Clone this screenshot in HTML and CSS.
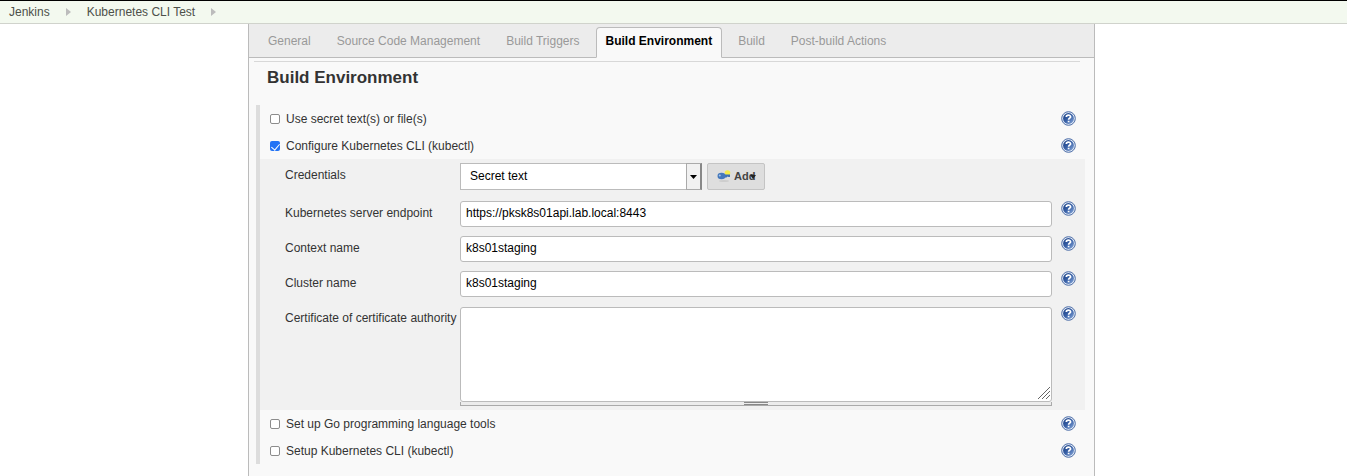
FILE: index.html
```
<!DOCTYPE html>
<html lang="en">
<head>
<meta charset="utf-8">
<title>Kubernetes CLI Test Config [Jenkins]</title>
<link rel="stylesheet" href="styles.css">
</head>
<body>
<svg class="defs" aria-hidden="true">
  <defs>
    <linearGradient id="help-fill" x1="0" y1="0" x2="1" y2="1">
      <stop offset="0" stop-color="#173c80"/>
      <stop offset="0.5" stop-color="#3a62a8"/>
      <stop offset="1" stop-color="#8dacdc"/>
    </linearGradient>
    <symbol id="help" viewBox="0 0 15 15">
      <circle cx="7.5" cy="7.5" r="6.8" fill="#e3ebf6" stroke="#4a6ba6" stroke-width="1"/>
      <circle cx="7.5" cy="7.5" r="5.4" fill="url(#help-fill)"/>
      <path d="M5.3 6.1C5.3 3.5 9.7 3.6 9.6 5.9C9.5 7.2 7.6 7.2 7.6 8.7M7.6 9.7V11.3" fill="none" stroke="#fff" stroke-width="1.7"/>
    </symbol>
  </defs>
</svg>
<nav class="crumbs" aria-label="Breadcrumbs">
  <a class="crumb" href="#">Jenkins</a>
  <svg class="crumb-arrow" viewBox="0 0 5 8"><path d="M0 0L5 4L0 8Z"/></svg>
  <a class="crumb" href="#">Kubernetes CLI Test</a>
  <svg class="crumb-arrow" viewBox="0 0 5 8"><path d="M0 0L5 4L0 8Z"/></svg>
</nav>
<main class="panel">
  <nav class="tabs" aria-label="Sections">
    <a class="tab" href="#">General</a>
    <a class="tab" href="#">Source Code Management</a>
    <a class="tab" href="#">Build Triggers</a>
    <a class="tab tab-active" href="#">Build Environment</a>
    <a class="tab" href="#">Build</a>
    <a class="tab" href="#">Post-build Actions</a>
  </nav>
  <form class="config">
    <h1 class="section-title">Build Environment</h1>
    <div class="section">
      <div class="option">
        <label class="option-label"><input class="check" type="checkbox">Use secret text(s) or file(s)</label>
        <button class="help" type="button" aria-label="Help"><svg class="help-icon"><use href="#help"/></svg></button>
      </div>
      <div class="option">
        <label class="option-label"><input class="check" type="checkbox" checked>Configure Kubernetes CLI (kubectl)</label>
        <button class="help" type="button" aria-label="Help"><svg class="help-icon"><use href="#help"/></svg></button>
      </div>
      <div class="fields">
        <div class="field field-credentials">
          <label class="field-label" for="credentials">Credentials</label>
          <div class="credentials">
            <div class="select-box">
              <select class="select" id="credentials"><option>Secret text</option></select>
              <span class="select-arrow"><svg class="caret" viewBox="0 0 7 4"><path d="M0 0H7L3.5 4Z"/></svg></span>
            </div>
            <button class="add" type="button">
              <svg class="key" viewBox="0 0 15 12">
                <ellipse cx="7" cy="11" rx="5" ry="1" fill="#cdcdcd"/>
                <circle cx="10.5" cy="3" r="2.8" fill="#f5ec4a"/>
                <path d="M6 4.5H13V7H11.5L10.5 6.5L9.5 7.5H6Z" fill="#3f72b5"/>
                <ellipse cx="4.5" cy="6" rx="4" ry="3.2" fill="#4478bc"/>
                <circle cx="2.8" cy="5.6" r="1" fill="#a9c4e6"/>
              </svg>
              <span class="add-text">Add<svg class="add-caret" viewBox="0 0 6 4"><path d="M0 0H6L3 4Z"/></svg></span>
            </button>
          </div>
        </div>
        <div class="field">
          <label class="field-label" for="endpoint">Kubernetes server endpoint</label>
          <input class="text" id="endpoint" type="text" value="https://pksk8s01api.lab.local:8443">
          <button class="help" type="button" aria-label="Help"><svg class="help-icon"><use href="#help"/></svg></button>
        </div>
        <div class="field">
          <label class="field-label" for="context">Context name</label>
          <input class="text" id="context" type="text" value="k8s01staging">
          <button class="help" type="button" aria-label="Help"><svg class="help-icon"><use href="#help"/></svg></button>
        </div>
        <div class="field">
          <label class="field-label" for="cluster">Cluster name</label>
          <input class="text" id="cluster" type="text" value="k8s01staging">
          <button class="help" type="button" aria-label="Help"><svg class="help-icon"><use href="#help"/></svg></button>
        </div>
        <div class="field">
          <label class="field-label" for="certificate">Certificate of certificate authority</label>
          <div class="area-box">
            <textarea class="area" id="certificate"></textarea>
            <svg class="grip" viewBox="0 0 14 14"><path d="M1 13L13 1M5 13L13 5M9 13L13 9"/></svg>
            <div class="area-handle"><span class="handle-mark"></span></div>
          </div>
          <button class="help" type="button" aria-label="Help"><svg class="help-icon"><use href="#help"/></svg></button>
        </div>
      </div>
      <div class="option">
        <label class="option-label"><input class="check" type="checkbox">Set up Go programming language tools</label>
        <button class="help" type="button" aria-label="Help"><svg class="help-icon"><use href="#help"/></svg></button>
      </div>
      <div class="option">
        <label class="option-label"><input class="check" type="checkbox">Setup Kubernetes CLI (kubectl)</label>
        <button class="help" type="button" aria-label="Help"><svg class="help-icon"><use href="#help"/></svg></button>
      </div>
    </div>
  </form>
</main>
</body>
</html>
```
FILE: styles.css
```
* { box-sizing: border-box; }
body {
  margin: 0;
  min-height: 100vh;
  display: flex;
  flex-direction: column;
  background: #fff;
  color: #333;
  font: 12px/16px "Liberation Sans", Arial, sans-serif;
}
button, input, select, textarea { font: inherit; margin: 0; }
a { text-decoration: none; }
.defs { position: absolute; width: 0; height: 0; }

.crumbs {
  display: flex;
  align-items: center;
  height: 24px;
  padding-left: 9px;
  gap: 16px;
  background: #f3f9ef;
  border-top: 1px solid #000;
  border-bottom: 1px solid #d0d3cc;
}
.crumb { color: #4d504a; }
.crumb-arrow { width: 5px; height: 8px; fill: #bcbcbc; }

.panel {
  flex: 1;
  margin: 0 252px 0 248px;
  border: solid #bbb;
  border-width: 0 1px;
  background: #f9f9f9;
}
.tabs {
  display: flex;
  align-items: flex-end;
  height: 34px;
  padding-left: 9px;
  background: #ececec;
  border-bottom: 1px solid #bbb;
}
.tab {
  height: 31px;
  margin-bottom: -1px;
  padding: 5px 9px;
  border: 1px solid transparent;
  color: #999;
  white-space: nowrap;
}
.tab + .tab { margin-left: 6px; }
.tab-active {
  background: #f9f9f9;
  border-color: #bbb;
  border-bottom-color: #f9f9f9;
  border-radius: 4px 4px 0 0;
  color: #000;
  font-weight: bold;
}

.config { padding: 3px 9px 12px 7px; }
.section-title {
  margin: 0 5px 0 -2px;
  padding: 6px 0 17px 13px;
  border-top: 1px solid #d8d8d8;
  font-size: 17px;
  line-height: 20px;
}
.section { border-left: 4px solid #ddd; }
.option {
  display: flex;
  align-items: center;
  justify-content: space-between;
  height: 27px;
  padding: 0 9px 0 10px;
}
.option-label { display: flex; align-items: center; gap: 6px; }
.check {
  appearance: none;
  width: 10px;
  height: 10px;
  border: 1px solid #8c8c8c;
  border-radius: 2px;
  background: #fff;
}
.check:checked {
  border: 0;
  background: #2273f5;
  display: flex;
  justify-content: center;
  padding-top: 1px;
}
.check:checked::after {
  content: "";
  width: 4px;
  height: 7px;
  border: solid #fff;
  border-width: 0 1px 1px 0;
  transform: rotate(40deg);
}
.help {
  flex: none;
  width: 15px;
  height: 15px;
  padding: 0;
  border: 0;
  background: none;
}
.help-icon { display: block; width: 15px; height: 15px; }

.fields {
  display: flex;
  flex-direction: column;
  gap: 9px;
  padding: 4px 9px 4px 25px;
  background: #f1f1f1;
}
.field {
  display: grid;
  grid-template-columns: 175px 1fr 15px;
  align-items: start;
}
.field-credentials { margin-bottom: 2px; }
.field-label { padding-top: 4px; white-space: nowrap; }
.text, .area {
  display: block;
  width: 100%;
  border: 1px solid #bbb;
  border-radius: 3px;
  background: #fff;
  color: #000;
}
.text { height: 26px; padding: 0 5px 2px; }
.text, .area-box { width: calc(100% - 9px); }
.credentials { display: flex; gap: 5px; }
.select-box { position: relative; width: 242px; }
.select {
  appearance: none;
  width: 100%;
  height: 27px;
  padding: 0 24px 1px 9px;
  border: 1px solid #bbb;
  border-radius: 0;
  background: #fff;
  color: #000;
}
.select-arrow {
  position: absolute;
  top: 0;
  right: 0;
  width: 16px;
  height: 27px;
  display: grid;
  place-items: center;
  border: 1px solid #aaa;
  border-right: 2px solid #888;
  background: #f1f1f1;
  pointer-events: none;
}
.caret { width: 7px; height: 4px; }
.add {
  display: flex;
  align-items: center;
  gap: 2px;
  width: 58px;
  height: 27px;
  padding: 0 8px 1px 9px;
  border: 1px solid #c4c4c4;
  border-radius: 2px;
  background: #dedede;
  color: #444;
  font-size: 11px;
  font-weight: bold;
}
.key { flex: none; width: 15px; height: 12px; }
.add-text { position: relative; }
.add-caret {
  position: absolute;
  right: -1px;
  top: 7px;
  width: 6px;
  height: 4px;
  fill: #222;
}
.area-box { position: relative; padding-top: 1px; }
.area { height: 95px; padding: 5px; resize: none; }
.grip {
  position: absolute;
  right: 1px;
  top: 80px;
  width: 14px;
  height: 14px;
  fill: none;
  stroke: #666;
}
.area-handle {
  display: flex;
  justify-content: center;
  height: 4px;
  background: #ececec;
  border: solid #aaa;
  border-width: 0 1px 1px;
}
.handle-mark {
  width: 24px;
  height: 3px;
  border: solid #888;
  border-width: 1px 0;
}
```
